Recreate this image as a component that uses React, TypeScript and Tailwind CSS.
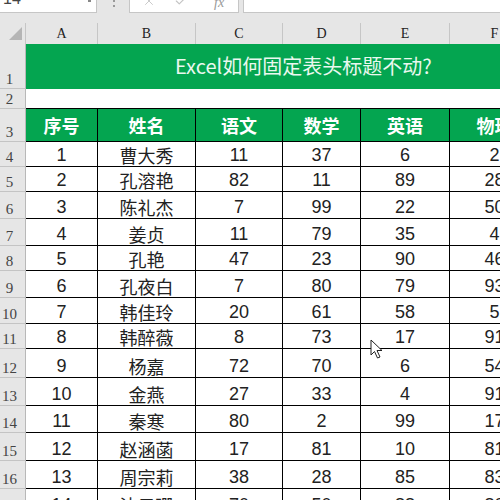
import { Check, X } from "lucide-react";

const cols = [
  { key: "A", w: "w-[72px]" },
  { key: "B", w: "w-[98px]" },
  { key: "C", w: "w-[87px]" },
  { key: "D", w: "w-[78px]" },
  { key: "E", w: "w-[89px]" },
  { key: "F", w: "w-[90px]" },
];

const heads = ["序号", "姓名", "语文", "数学", "英语", "物理"];

const rows: (string | number)[][] = [
  [1, "曹大秀", 11, 37, 6, 2],
  [2, "孔溶艳", 82, 11, 89, 28],
  [3, "陈礼杰", 7, 99, 22, 50],
  [4, "姜贞", 11, 79, 35, 4],
  [5, "孔艳", 47, 23, 90, 46],
  [6, "孔夜白", 7, 80, 79, 93],
  [7, "韩佳玲", 20, 61, 58, 5],
  [8, "韩醉薇", 8, 73, 17, 91],
  [9, "杨嘉", 72, 70, 6, 54],
  [10, "金燕", 27, 33, 4, 91],
  [11, "秦寒", 80, 2, 99, 17],
  [12, "赵涵菡", 17, 81, 10, 81],
  [13, "周宗莉", 38, 28, 85, 83],
  [14, "沈云珊", 70, 50, 88, 80],
];

// pixel heights measured off the sheet (rows 4..17)
const heights = ["h-[25px]", "h-[25px]", "h-[27px]", "h-[27px]", "h-[25px]", "h-[27px]", "h-[26px]", "h-[25px]", "h-[29px]", "h-[28px]", "h-[27px]", "h-[28px]", "h-[28px]", "h-[28px]"];

function RowHead({ n, h, className = "" }: { n: number; h: string; className?: string }) {
  return (
    <div className={`${h} w-[26px] shrink-0 bg-[#e6e6e6] border-r border-b border-r-[#b8b8b8] border-b-[#c4c4c4] flex items-end pb-[1px] ${className}`}>
      <span className="w-[19px] text-center text-[15px] leading-[15px] text-[#444] font-['Liberation_Serif',serif]">{n}</span>
    </div>
  );
}

function Cursor() {
  return (
    <svg className="absolute left-[370px] top-[339px]" width="16" height="22" viewBox="0 0 16 22">
      <path d="M1 1 L1 16 L4.5 12.5 L7.5 19 L10 18 L7 11.5 L12 11.5 Z" fill="#fff" stroke="#222" strokeWidth="1" strokeLinejoin="round" />
    </svg>
  );
}

export default function App() {
  return (
    <div className="relative w-[500px] h-[500px] overflow-hidden bg-white font-['Liberation_Sans','Noto_Sans_CJK_SC',sans-serif]">
      {/* formula bar strip, only its bottom edge shows */}
      <div className="h-[14px] flex bg-[#e6e6e6] overflow-hidden">
        <div className="w-[97px] h-[13px] bg-white border-b border-r border-[#c6c6c6] relative">
          <span className="absolute left-[3px] bottom-[5px] text-[16px] leading-[16px] text-[#444]">14</span>
          <span className="absolute left-[88px] top-0 w-[3px] h-[2px] bg-[#888]" />
        </div>
        <div className="w-[32px] relative">
          <span className="absolute left-[16px] top-0 w-[2px] h-[2px] bg-[#999]" />
          <span className="absolute left-[16px] top-[5px] w-[2px] h-[2px] bg-[#999]" />
        </div>
        <div className="w-[110px] h-[13px] bg-white border-b border-x border-[#c6c6c6] relative">
          <X className="absolute left-[12px] -top-[6px] text-[#c4c4c4]" size={14} strokeWidth={1.5} />
          <Check className="absolute left-[44px] -top-[6px] text-[#c4c4c4]" size={14} strokeWidth={2} />
          <span className="absolute left-[84px] -top-[8px] text-[14px] italic text-[#999] font-['Liberation_Serif',serif]">fx</span>
        </div>
        <div className="w-[4px]" />
        <div className="flex-1 h-[13px] bg-white border-b border-l border-[#c6c6c6]" />
      </div>

      <div className="h-[9px] bg-[#e6e6e6]" />

      {/* column letters */}
      <div className="flex h-[21px] bg-[#e6e6e6]">
        <div className="w-[26px] shrink-0 border-r border-[#c6c6c6] relative">
          <svg className="absolute left-[9px] top-[4px]" width="13" height="13" viewBox="0 0 13 13">
            <path d="M13 0 L13 13 L0 13 Z" fill="#b5b5b5" />
          </svg>
        </div>
        {cols.map((c) => (
          <div key={c.key} className={`${c.w} shrink-0 border-r border-[#c6c6c6] flex items-center justify-center text-[14px] text-[#222] font-['Liberation_Serif',serif]`}>
            {c.key}
          </div>
        ))}
      </div>

      {/* row 1: title */}
      <div className="flex">
        <RowHead n={1} h="h-[45px]" />
        <div className="flex-1 h-[45px] bg-[#04a550] flex items-center pl-[149px] pb-[2px]">
          <span className="text-[20px] leading-[24px] text-[#eaf8ef] font-['Noto_Sans_CJK_SC',sans-serif] whitespace-nowrap">Excel如何固定表头标题不动?</span>
        </div>
      </div>

      {/* row 2 */}
      <div className="flex">
        <RowHead n={2} h="h-[20px]" />
        <div className="flex-1 h-[20px] bg-white border-b border-black" />
      </div>

      {/* row 3: headers */}
      <div className="flex">
        <RowHead n={3} h="h-[33px]" />
        {cols.map((c, i) => (
          <div key={c.key} className={`${c.w} h-[33px] shrink-0 bg-[#04a550] border-r border-b border-black flex items-center justify-center`}>
            <span className="text-[18px] leading-[20px] font-bold text-white font-['Noto_Sans_CJK_SC',sans-serif] whitespace-nowrap">{heads[i]}</span>
          </div>
        ))}
      </div>

      {rows.map((r, ri) => (
        <div key={ri} className="flex">
          <RowHead n={ri + 4} h={heights[ri]} />
          {cols.map((c, ci) => (
            <div key={c.key} className={`${c.w} ${heights[ri]} shrink-0 border-r border-b border-black flex items-end justify-center pb-[2px]`}>
              <span className={`text-[18px] leading-[18px] text-[#222] whitespace-nowrap ${ci === 1 ? "font-['Noto_Sans_CJK_SC',sans-serif]" : "font-['Liberation_Sans',sans-serif]"}`}>
                {r[ci]}
              </span>
            </div>
          ))}
        </div>
      ))}

      <Cursor />
    </div>
  );
}
